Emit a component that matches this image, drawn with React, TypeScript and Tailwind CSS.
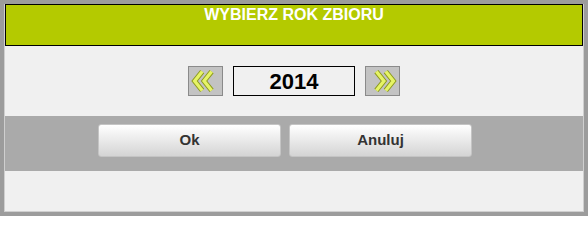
const Chevrons = ({ dir }: { dir: "left" | "right" }) => {
  const d =
    dir === "left"
      ? ["M14 5 L6 15 L14 25", "M24 5 L16 15 L24 25"]
      : ["M11 5 L19 15 L11 25", "M21 5 L29 15 L21 25"];
  return (
    <svg width="35" height="30" viewBox="0 0 35 30">
      {d.map((p, i) => (
        <path key={"o" + i} d={p} fill="none" stroke="#8c9a1e" strokeWidth="5.5" strokeLinejoin="miter" strokeLinecap="butt" />
      ))}
      {d.map((p, i) => (
        <path key={"i" + i} d={p} fill="none" stroke="#e6f466" strokeWidth="3.5" strokeLinejoin="miter" strokeLinecap="butt" />
      ))}
    </svg>
  );
};

const ArrowButton = ({ dir }: { dir: "left" | "right" }) => (
  <button className="w-[35px] h-[30px] bg-[#c3c3c3] border border-[#8a8a8a] flex items-center justify-center">
    <Chevrons dir={dir} />
  </button>
);

const DialogButton = ({ label }: { label: string }) => (
  <button className="w-[183px] h-[33px] rounded-[3px] border border-[#c4c4c4] bg-gradient-to-b from-white to-[#d4d4d4] text-[15px] font-bold text-[#333]">
    {label}
  </button>
);

export default function App() {
  return (
    <div
      className="w-[588px] h-[216px] flex flex-col bg-[#f0f0f0] border-4 border-[#9c9c9c] px-[1px] shadow-[inset_0_0_0_1px_#cfcfcf]"
      style={{ fontFamily: '"Liberation Sans", Arial, sans-serif' }}
    >
      {/* Header */}
      <div className="h-[42px] border border-black bg-[#b4ca00] text-center pt-[1px] leading-[18px]">
        <span className="text-white text-[16px] font-bold">WYBIERZ ROK ZBIORU</span>
      </div>

      {/* Year picker */}
      <div className="h-[70px] flex items-center justify-center gap-[10px]">
        <ArrowButton dir="left" />
        <div className="w-[122px] h-[30px] border border-black flex items-center justify-center text-[22px] font-bold text-black">
          2014
        </div>
        <ArrowButton dir="right" />
      </div>

      {/* Actions */}
      <div className="h-[55px] bg-[#aaaaaa] flex items-start gap-[8px] pl-[93px] pt-[8px]">
        <DialogButton label="Ok" />
        <DialogButton label="Anuluj" />
      </div>

      <div className="flex-1" />
    </div>
  );
}
